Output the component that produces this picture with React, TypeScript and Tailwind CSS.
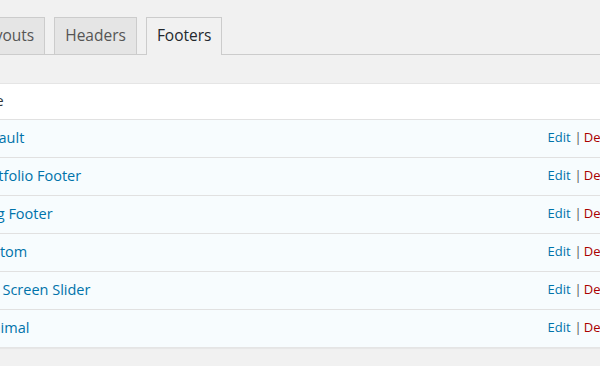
import React from 'react'

const tabs = [
  { label: 'Layouts', active: false },
  { label: 'Headers', active: false },
  { label: 'Footers', active: true },
]

const footers = ['Default', 'Portfolio Footer', 'Blog Footer', 'Custom', 'Full Screen Slider', 'Minimal']

export default function App() {
  return (
    <div className="w-[600px] h-[366px] overflow-hidden bg-[#f1f1f1] font-['Open_Sans',sans-serif]">
      <div className="ml-[-40px] w-[690px] pt-[17px]">
        {/* Tabs */}
        <div className="flex items-start h-[38px] border-b border-[#cccccc] pl-[7px]">
          {tabs.map((tab, i) => (
            <div
              key={tab.label}
              className={
                (i > 0 ? 'ml-[9px] ' : '') +
                (tab.active
                  ? 'h-[38px] pb-[3px] bg-[#f1f1f1] text-[#23282d] '
                  : 'h-[37px] pb-[2px] bg-[#e5e5e5] text-[#555555] ') +
                'flex items-center px-[10px] border border-b-0 border-[#cccccc] text-[15.5px] leading-6'
              }
            >
              {tab.label}
            </div>
          ))}
        </div>

        {/* Table */}
        <div className="mt-[28px] w-[674px] bg-white border border-[#e5e5e5] shadow-[0_1px_1px_rgba(0,0,0,0.04)]">
          <div className="h-[35px] flex items-center pl-[14px] pb-[1px] text-[14.5px] text-[#32373c]">Title</div>
          {footers.map((name) => (
            <div
              key={name}
              className="h-[38px] flex items-center justify-between border-t border-[#e1e1e1] bg-[#f7fcfe] pl-[14px] pr-[10px] pb-[2px]"
            >
              <span className="text-[14.5px] text-[#0073aa]">{name}</span>
              <span className="text-[13px] flex items-center">
                <span className="text-[#0073aa] mr-[4px]">Edit</span>
                <span className="text-[#555555] mr-[2px]">|</span>
                <span className="text-[#aa0000]">Delete</span>
              </span>
            </div>
          ))}
        </div>
      </div>
    </div>
  )
}
